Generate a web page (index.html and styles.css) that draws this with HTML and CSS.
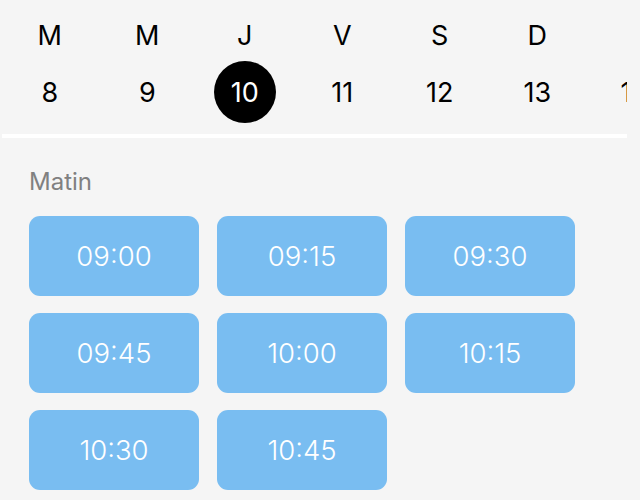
FILE: index.html
```html
<!DOCTYPE html>
<html lang="fr">
<head>
    <meta charset="UTF-8">
    <meta name="viewport" content="width=device-width, initial-scale=1.0">
    <title>Créneaux</title>
    <link rel="stylesheet" href="styles.css">
</head>
<body>
    <div class="week">
        <div class="week-row letters">
            <div class="day">M</div>
            <div class="day">M</div>
            <div class="day">J</div>
            <div class="day">V</div>
            <div class="day">S</div>
            <div class="day">D</div>
            <div class="day"></div>
        </div>
        <div class="week-row numbers">
            <div class="day"><span class="date">8</span></div>
            <div class="day"><span class="date">9</span></div>
            <div class="day"><span class="date selected">10</span></div>
            <div class="day"><span class="date">11</span></div>
            <div class="day"><span class="date">12</span></div>
            <div class="day"><span class="date">13</span></div>
            <div class="day"><span class="date">14</span></div>
        </div>
    </div>
    <div class="divider"></div>

    <div class="slots">
        <h3 class="period">Matin</h3>
        <div class="slot-grid">
            <button class="slot">09:00</button>
            <button class="slot">09:15</button>
            <button class="slot">09:30</button>
            <button class="slot">09:45</button>
            <button class="slot">10:00</button>
            <button class="slot">10:15</button>
            <button class="slot">10:30</button>
            <button class="slot">10:45</button>
        </div>
    </div>
</body>
</html>
```

FILE: styles.css
```css
body {
    margin: 0;
    background: #f5f5f5;
    font-family: Inter, "Noto Sans", sans-serif;
    color: #000000;
    overflow: hidden;
}

.week {
    width: 626px;
    margin-left: 1px;
    padding-top: 15px;
    overflow: hidden;
}

.week-row {
    display: flex;
}

.week-row .day {
    flex: 0 0 97.5px;
    display: flex;
    justify-content: center;
    align-items: center;
    font-size: 27px;
}

.letters .day {
    height: 40px;
}

.numbers {
    margin-top: 6px;
}

.numbers .day {
    height: 62px;
}

.date {
    width: 62px;
    height: 62px;
    border-radius: 50%;
    display: flex;
    justify-content: center;
    align-items: center;
}

.date.selected {
    background: #000000;
    color: #ffffff;
}

.divider {
    width: 625px;
    height: 4px;
    margin: 11px 0 0 2px;
    background: #ffffff;
}

.slots {
    padding-left: 29px;
}

.period {
    margin: 0;
    padding-top: 30px;
    height: 28px;
    line-height: 28px;
    font-size: 24px;
    font-weight: 400;
    color: #808080;
}

.slot-grid {
    display: grid;
    grid-template-columns: repeat(3, 170px);
    grid-auto-rows: 80px;
    gap: 17px 18px;
    margin-top: 20px;
}

.slot {
    border: none;
    border-radius: 11px;
    background: #79bdf1;
    color: #ffffff;
    font-family: inherit;
    font-size: 27.5px;
    font-weight: 300;
    padding: 0;
}
```
